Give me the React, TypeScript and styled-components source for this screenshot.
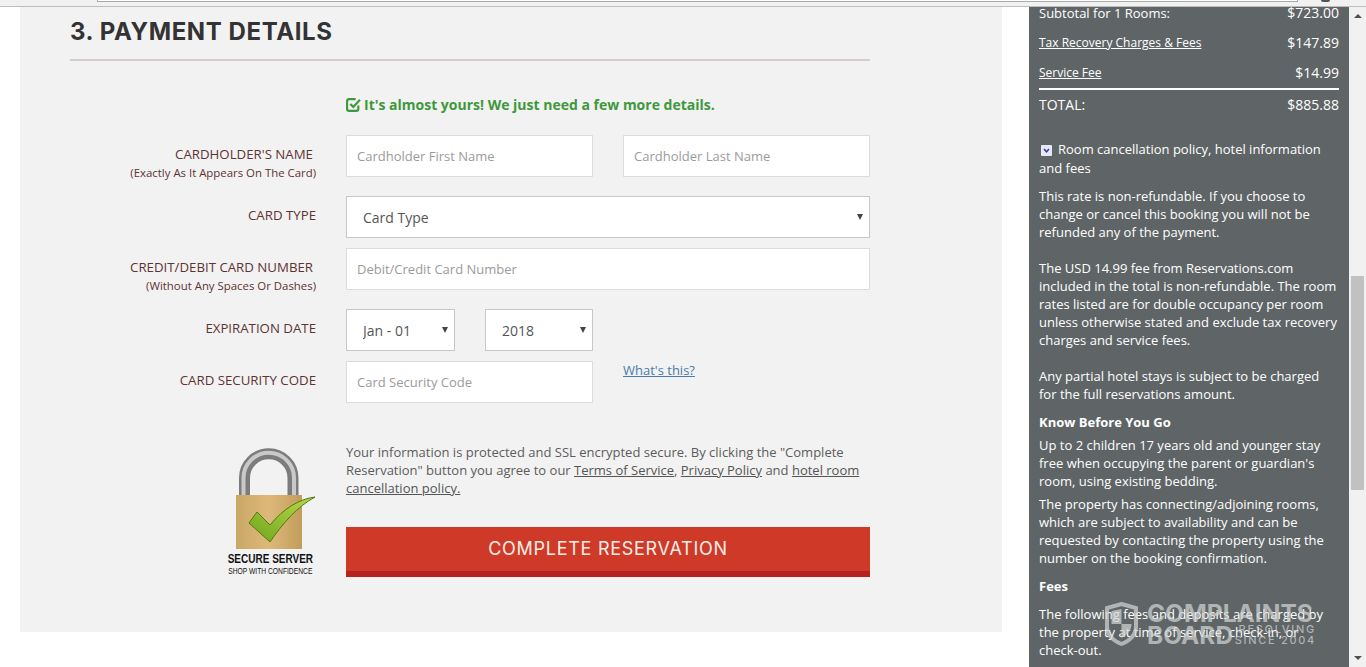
import React from "react";
import styled, { createGlobalStyle } from "styled-components";

const Global = createGlobalStyle`
  html, body { margin: 0; padding: 0; height: 100%; background: #fff; overflow: hidden; }
  body { font-family: "Open Sans", "Liberation Sans", sans-serif; }
  * { box-sizing: border-box; }
`;

const Page = styled.div`
  position: relative;
  width: 1366px;
  height: 667px;
  display: flex;
  flex-direction: column;
  overflow: hidden;
`;

const BrowserEdge = styled.div`
  height: 7px;
  flex: none;
  background: #f1f1f1;
  border-bottom: 1px solid #bdbdbd;
  padding-left: 97px;
  display: flex;
  align-items: flex-start;
`;

const AddressBox = styled.div`
  width: 1201px;
  height: 2px;
  background: #fff;
  border: 1px solid #a9a9a9;
  border-top: none;
`;

const ToolbarDot = styled.div`
  width: 9px;
  height: 2px;
  margin-left: 23px;
  background: #555;
  border-radius: 0 0 5px 5px;
`;

const Viewport = styled.div`
  flex: 1;
  display: flex;
  min-height: 0;
`;

const Main = styled.main`
  width: 1029px;
  flex: none;
  padding-left: 20px;
`;

const Panel = styled.section`
  width: 982px;
  height: 625px;
  background: #f2f2f2;
  padding: 0 132px 0 50px;
`;

const Heading = styled.h2`
  margin: 0;
  height: 54px;
  line-height: 49px;
  font-family: Inter, "Liberation Sans", sans-serif;
  font-size: 24px;
  letter-spacing: 0.6px;
  font-weight: 700;
  color: #333;
  border-bottom: 2px solid #d6cdcb;
`;

const Notice = styled.div`
  margin: 33px 0 0 276px;
  height: 20px;
  display: flex;
  align-items: center;
  gap: 3px;
  font-size: 14px;
  font-weight: 700;
  color: #3f983c;
`;

const Row = styled.div<{ $top: number }>`
  margin-top: ${(p) => p.$top}px;
  display: flex;
  gap: 30px;
  height: 42px;
`;

const LabelCol = styled.div`
  width: 246px;
  flex: none;
  padding-top: 10px;
  text-align: right;
`;

const Label = styled.div<{ $inset?: boolean }>`
  font-size: 13.25px;
  line-height: 18px;
  color: #5e3333;
  padding-right: ${(p) => (p.$inset ? 3 : 0)}px;
`;

const SubLabel = styled.div`
  margin-top: 1px;
  font-size: 11.4px;
  line-height: 18px;
  color: #5e3333;
`;

const Fields = styled.div`
  display: flex;
  gap: 30px;
  width: 524px;
`;

const Input = styled.input<{ $w?: number }>`
  width: ${(p) => (p.$w ? `${p.$w}px` : "100%")};
  height: 42px;
  border: 1px solid #dcdcdc;
  background: #fff;
  padding: 0 10px;
  font-family: inherit;
  font-size: 13px;
  color: #555;
  outline: none;
  &::placeholder { color: #9b9b9b; opacity: 1; }
`;

const SelectWrap = styled.div<{ $w?: number }>`
  position: relative;
  width: ${(p) => (p.$w ? `${p.$w}px` : "100%")};
  height: 42px;
`;

const Select = styled.select`
  width: 100%;
  height: 100%;
  appearance: none;
  border: 1px solid #c8c8c8;
  border-radius: 0;
  background: #fff;
  padding: 0 0 0 16px;
  font-family: inherit;
  font-size: 14px;
  color: #555;
  outline: none;
`;

const Caret = styled.span`
  position: absolute;
  right: 7px;
  top: 18px;
  width: 0;
  height: 0;
  border-left: 3px solid transparent;
  border-right: 3px solid transparent;
  border-top: 6px solid #444;
  pointer-events: none;
`;

const HelpLink = styled.a`
  line-height: 18px;
  font-size: 13px;
  color: #4a7ca8;
  text-decoration: underline;
`;

const Closing = styled.div`
  margin-top: 40px;
  display: flex;
  gap: 30px;
`;

const BadgeCol = styled.div`
  width: 246px;
  flex: none;
  padding: 4px 1px 0 0;
  display: flex;
  justify-content: flex-end;
`;

const Badge = styled.div`
  width: 90px;
  display: flex;
  flex-direction: column;
  align-items: center;
`;

const BadgeTitle = styled.div`
  margin-top: 3px;
  font-family: "Liberation Sans", sans-serif;
  font-size: 12.5px;
  line-height: 14px;
  font-weight: 700;
  color: #111;
  white-space: nowrap;
  transform: scaleX(0.8);
`;

const BadgeSub = styled.div`
  font-family: "Liberation Sans", sans-serif;
  font-size: 8.5px;
  line-height: 11px;
  color: #111;
  white-space: nowrap;
  transform: scaleX(0.79);
`;

const Submit = styled.div`
  width: 524px;
`;

const Legal = styled.p`
  margin: 0;
  font-size: 13px;
  line-height: 18px;
  color: #5c5c5c;
  a { color: #555; text-decoration: underline; }
`;

const SubmitButton = styled.button`
  display: block;
  margin-top: 30px;
  width: 100%;
  height: 50px;
  padding: 0 0 2px;
  border: none;
  border-bottom: 6px solid #b6221e;
  background: #cf3a28;
  color: #fbeee8;
  font-family: Inter, "Liberation Sans", sans-serif;
  font-size: 18px;
  letter-spacing: 0.72px;
  font-weight: 400;
`;

const Sidebar = styled.aside`
  width: 320px;
  flex: none;
  background: #5f6566;
  padding: 0 10px;
  color: #fff;
  overflow: hidden;
  font-size: 13px;
  line-height: 18px;
`;

const Line = styled.div<{ $first?: boolean }>`
  height: 30px;
  margin-top: ${(p) => (p.$first ? -9 : 0)}px;
  display: flex;
  justify-content: space-between;
  align-items: center;
  font-size: 13px;
  a { color: #fff; text-decoration: underline; font-size: 12px; }
`;

const Amount = styled.span`
  font-size: 14px;
`;

const TotalLine = styled(Line)`
  border-top: 2px solid #fff;
  height: 32px;
  font-size: 14px;
`;

const PolicyHead = styled.div`
  margin-top: 20px;
  line-height: 19px;
`;

const Chevron = styled.svg`
  display: inline-block;
  vertical-align: -2px;
  margin: 0 6px 0 2px;
`;

const Para = styled.p<{ $top: number }>`
  margin: ${(p) => p.$top}px 0 0;
`;

const Strong = styled.div<{ $top: number }>`
  margin-top: ${(p) => p.$top}px;
  font-weight: 700;
`;

const Scrollbar = styled.div`
  width: 17px;
  flex: none;
  background: #f1f1f1;
  display: flex;
  flex-direction: column;
  align-items: center;
  padding-top: 7px;
`;

const ArrowUp = styled.span`
  width: 0;
  height: 0;
  border-left: 4px solid transparent;
  border-right: 4px solid transparent;
  border-bottom: 4px solid #505050;
`;

const ArrowDown = styled.span`
  margin-top: 166px;
  width: 0;
  height: 0;
  border-left: 4px solid transparent;
  border-right: 4px solid transparent;
  border-top: 4px solid #505050;
`;

const Thumb = styled.div`
  margin-top: 258px;
  width: 13px;
  height: 214px;
  background: #c1c1c1;
`;

const Watermark = styled.div`
  position: absolute;
  left: 1105px;
  top: 602px;
  display: flex;
  gap: 9px;
  color: rgba(208, 211, 211, 0.72);
  pointer-events: none;
`;

const MarkText = styled.div`
  width: 169px;
  font-family: Inter, "Liberation Sans", sans-serif;
`;

const MarkTitle = styled.div`
  font-size: 24.5px;
  line-height: 22px;
  font-weight: 700;
  white-space: nowrap;
`;

const MarkBottom = styled.div`
  display: flex;
  justify-content: space-between;
  align-items: center;
`;

const MarkSmall = styled.div`
  font-size: 11px;
  line-height: 11px;
  letter-spacing: 1.7px;
  font-weight: 500;
  text-align: right;
  white-space: nowrap;
`;

const Lock = () => (
  <svg width="90" height="102" viewBox="0 0 90 102" aria-hidden="true">
    <defs>
      <linearGradient id="body" x1="0" x2="1" y1="0" y2="0">
        <stop offset="0" stopColor="#c9a867" />
        <stop offset="0.5" stopColor="#deb878" />
        <stop offset="1" stopColor="#c19d5c" />
      </linearGradient>
      <linearGradient id="tick" x1="0" x2="1" y1="1" y2="0">
        <stop offset="0" stopColor="#6fa51c" />
        <stop offset="1" stopColor="#b9d84a" />
      </linearGradient>
    </defs>
    <path d="M19.5 50 V31 A24.25 24.25 0 0 1 68 31 V50" fill="none" stroke="#7c7c7c" strokeWidth="11" />
    <path d="M18.5 50 V31 A25.25 25.25 0 0 1 69 31 V50" fill="none" stroke="#c9c9c9" strokeWidth="4" />
    <rect x="11" y="48" width="66" height="54" fill="url(#body)" />
    <path d="M24 76 L32 65 L45 78 C58 62 74 52 90 50 C72 60 58 76 45 95 Z" fill="url(#tick)" stroke="#4f7a13" strokeWidth="1" />
  </svg>
);

const CheckSquare = () => (
  <svg width="15" height="15" viewBox="0 0 14 14" fill="none" stroke="#3f983c" strokeWidth="2" aria-hidden="true">
    <path d="M11.5 8 V11 Q11.5 13 9.5 13 H3 Q1 13 1 11 V4 Q1 2 3 2 H9" />
    <path d="M4 6.5 L6.8 9.2 L13 2.5" />
  </svg>
);

const Shield = () => (
  <svg width="33" height="44" viewBox="0 0 33 44" aria-hidden="true">
    <path d="M16.5 2 L31 6 V24 C31 33 24 39 16.5 42 C9 39 2 33 2 24 V6 Z" fill="none" stroke="rgba(208,211,211,.72)" strokeWidth="4" />
    <path d="M16.5 7 V22 H6.5 V9 Z M16.5 22 H26.5 C26.5 29 22 33 16.5 36 Z" fill="rgba(208,211,211,.72)" />
  </svg>
);

export default function App() {
  return (
    <Page>
      <Global />
      <BrowserEdge>
        <AddressBox />
        <ToolbarDot />
      </BrowserEdge>
      <Viewport>
        <Main>
          <Panel>
            <Heading>3. PAYMENT DETAILS</Heading>
            <Notice>
              <CheckSquare />
              <span>It's almost yours! We just need a few more details.</span>
            </Notice>
            <Row $top={21}>
              <LabelCol>
                <Label $inset>CARDHOLDER'S NAME</Label>
                <SubLabel>(Exactly As It Appears On The Card)</SubLabel>
              </LabelCol>
              <Fields>
                <Input $w={247} placeholder="Cardholder First Name" />
                <Input $w={247} placeholder="Cardholder Last Name" />
              </Fields>
            </Row>
            <Row $top={19}>
              <LabelCol>
                <Label>CARD TYPE</Label>
              </LabelCol>
              <Fields>
                <SelectWrap>
                  <Select defaultValue="Card Type">
                    <option>Card Type</option>
                  </Select>
                  <Caret />
                </SelectWrap>
              </Fields>
            </Row>
            <Row $top={10}>
              <LabelCol>
                <Label $inset>CREDIT/DEBIT CARD NUMBER</Label>
                <SubLabel>(Without Any Spaces Or Dashes)</SubLabel>
              </LabelCol>
              <Fields>
                <Input placeholder="Debit/Credit Card Number" />
              </Fields>
            </Row>
            <Row $top={19}>
              <LabelCol>
                <Label>EXPIRATION DATE</Label>
              </LabelCol>
              <Fields>
                <SelectWrap $w={109}>
                  <Select defaultValue="Jan - 01">
                    <option>Jan - 01</option>
                  </Select>
                  <Caret />
                </SelectWrap>
                <SelectWrap $w={108}>
                  <Select defaultValue="2018">
                    <option>2018</option>
                  </Select>
                  <Caret />
                </SelectWrap>
              </Fields>
            </Row>
            <Row $top={10}>
              <LabelCol>
                <Label>CARD SECURITY CODE</Label>
              </LabelCol>
              <Fields>
                <Input $w={247} placeholder="Card Security Code" />
                <HelpLink href="#">What's this?</HelpLink>
              </Fields>
            </Row>
            <Closing>
              <BadgeCol>
                <Badge>
                  <Lock />
                  <BadgeTitle>SECURE SERVER</BadgeTitle>
                  <BadgeSub>SHOP WITH CONFIDENCE</BadgeSub>
                </Badge>
              </BadgeCol>
              <Submit>
                <Legal>
                  Your information is protected and SSL encrypted secure. By clicking the "Complete Reservation" button
                  you agree to our <a href="#">Terms of Service</a>, <a href="#">Privacy Policy</a> and{" "}
                  <a href="#">hotel room cancellation policy.</a>
                </Legal>
                <SubmitButton type="button">COMPLETE RESERVATION</SubmitButton>
              </Submit>
            </Closing>
          </Panel>
        </Main>
        <Sidebar>
          <Line $first>
            <span>Subtotal for 1 Rooms:</span>
            <Amount>$723.00</Amount>
          </Line>
          <Line>
            <a href="#">Tax Recovery Charges &amp; Fees</a>
            <Amount>$147.89</Amount>
          </Line>
          <Line>
            <a href="#">Service Fee</a>
            <Amount>$14.99</Amount>
          </Line>
          <TotalLine>
            <span>TOTAL:</span>
            <Amount>$885.88</Amount>
          </TotalLine>
          <PolicyHead>
            <Chevron width="11" height="11" viewBox="0 0 11 11" aria-hidden="true">
              <rect width="11" height="11" rx="1" fill="#e6e8fa" />
              <path d="M3 4 L5.5 6.8 L8 4" fill="none" stroke="#2a3f9a" strokeWidth="1.5" />
            </Chevron>
            Room cancellation policy, hotel information and fees
          </PolicyHead>
          <Para $top={9}>
            This rate is non-refundable. If you choose to change or cancel this booking you will not be refunded any of
            the payment.
          </Para>
          <Para $top={18}>
            The USD 14.99 fee from Reservations.com included in the total is non-refundable. The room rates listed are
            for double occupancy per room unless otherwise stated and exclude tax recovery charges and service fees.
          </Para>
          <Para $top={18}>Any partial hotel stays is subject to be charged for the full reservations amount.</Para>
          <Strong $top={10}>Know Before You Go</Strong>
          <Para $top={5}>
            Up to 2 children 17 years old and younger stay free when occupying the parent or guardian's room, using
            existing bedding.
          </Para>
          <Para $top={5}>
            The property has connecting/adjoining rooms, which are subject to availability and can be requested by
            contacting the property using the number on the booking confirmation.
          </Para>
          <Strong $top={10}>Fees</Strong>
          <Para $top={10}>
            The following fees and deposits are charged by the property at time of service, check-in, or check-out.
          </Para>
        </Sidebar>
        <Scrollbar>
          <ArrowUp />
          <Thumb />
          <ArrowDown />
        </Scrollbar>
      </Viewport>
      <Watermark>
        <Shield />
        <MarkText>
          <MarkTitle>COMPLAINTS</MarkTitle>
          <MarkBottom>
            <MarkTitle>BOARD</MarkTitle>
            <MarkSmall>
              RESOLVING
              <br />
              SINCE 2004
            </MarkSmall>
          </MarkBottom>
        </MarkText>
      </Watermark>
    </Page>
  );
}
